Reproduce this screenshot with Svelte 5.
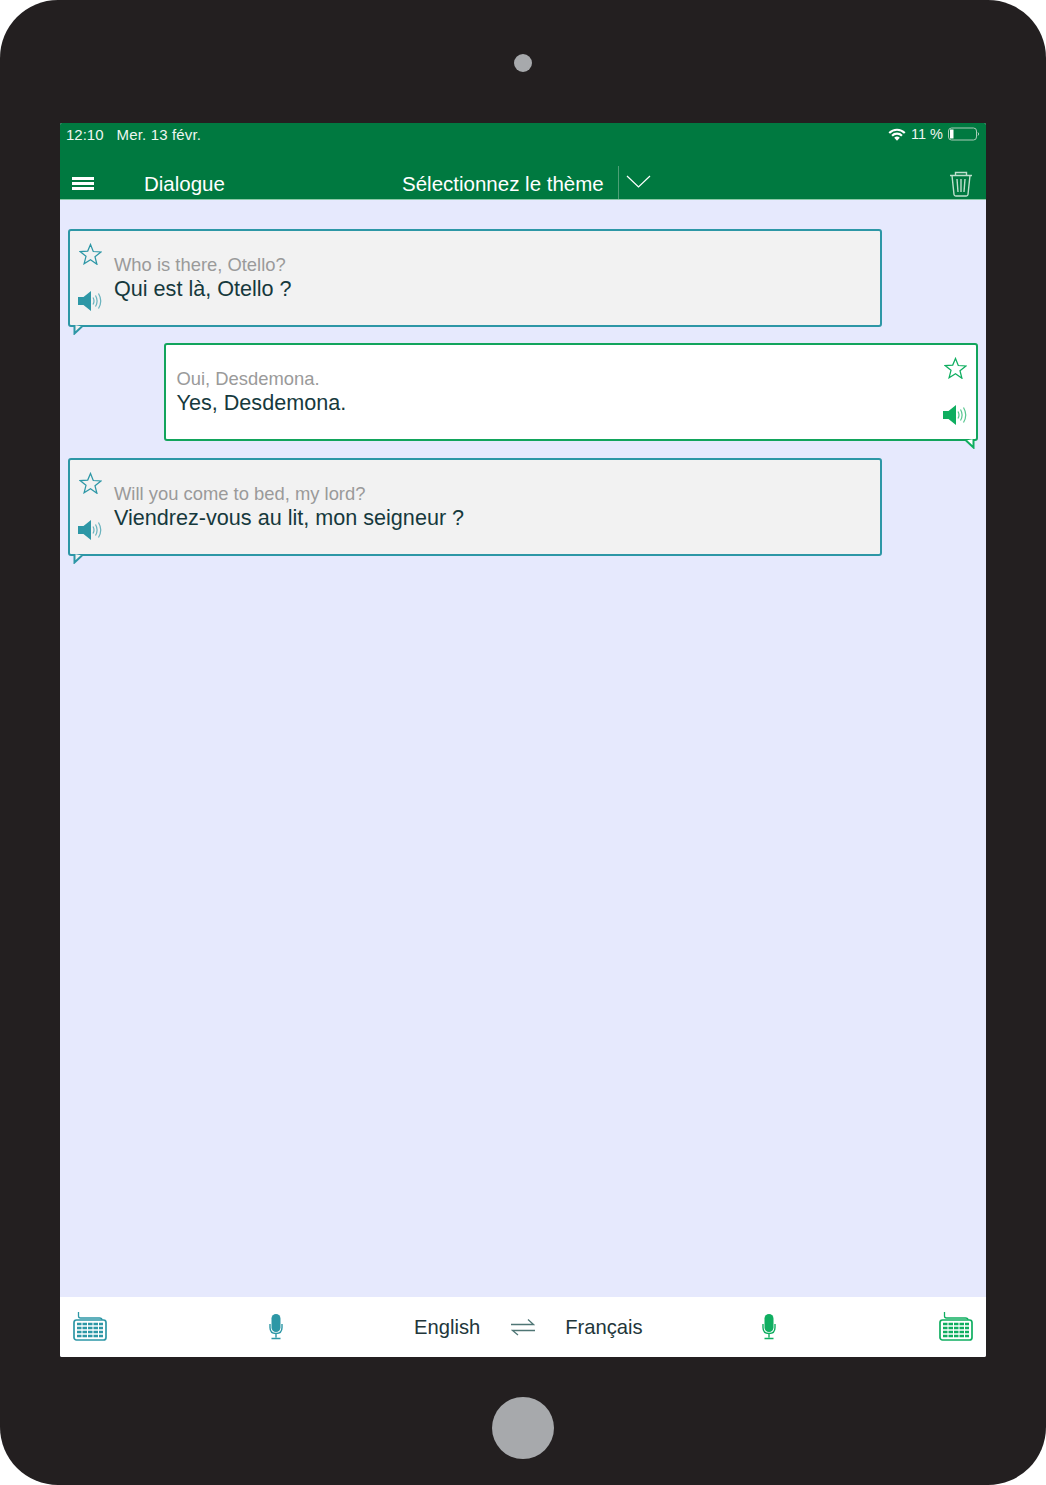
<script>
	const messages = [
		{ side: 'left', source: 'Who is there, Otello?', target: 'Qui est là, Otello ?' },
		{ side: 'right', source: 'Oui, Desdemona.', target: 'Yes, Desdemona.' },
		{ side: 'left', source: 'Will you come to bed, my lord?', target: 'Viendrez-vous au lit, mon seigneur ?' }
	];
</script>

{#snippet star()}
	<svg class="star" viewBox="0 0 24 23" width="23" height="22" fill="none" stroke="currentColor" stroke-width="1.300">
		<path d="M12 1.500l2.900 7.400 8 .5-6.200 5 2 7.800L12 17.500l-6.700 4.200 2-7.800-6.200-5 8-.5z" />
	</svg>
{/snippet}

{#snippet speaker()}
	<svg class="speaker" viewBox="0 0 24 20" width="24" height="20" fill="none" stroke="currentColor">
		<path class="solid" d="M0 6h5.500L13 0v20l-7.500-6H0z" />
		<path d="M15 6.500q2 3.500 0 7M17.500 4.500q3.200 5.500 0 11M20.500 2.500q4.500 7.500 0 15" stroke-width="1.200" opacity="0.7" />
	</svg>
{/snippet}

{#snippet keyboard()}
	<svg class="keyboard" viewBox="0 0 34 30" width="34" height="30" fill="none" stroke="currentColor">
		<path d="M5.500 1v4q0 2 2 2h19q2.500 0 2.500 2" stroke-width="1.300" />
		<rect x="1" y="9" width="32" height="20" rx="2.500" stroke-width="1.700" />
		{#each [13, 17, 21, 25] as y}
			<path d="M4 {y}h26" stroke-width="2.300" stroke-dasharray="4.500 1" />
		{/each}
	</svg>
{/snippet}

{#snippet mic()}
	<svg class="mic" viewBox="0 0 14 26" width="14" height="26" fill="none" stroke="currentColor" stroke-width="1.200">
		<rect class="solid" x="2.500" y="0" width="9" height="18" rx="4.500" />
		<path d="M1 10v3.500q0 6 6 6t6-6V10M7 19.500v4M2.500 24.500h9" stroke-width="1.400" />
	</svg>
{/snippet}

<div class="device">
	<div class="camera"></div>

	<div class="screen">
		<header class="top">
			<div class="status">
				<span class="time">12:10</span>
				<span class="date">Mer. 13 févr.</span>
				<span class="status-right">
					<svg viewBox="0 0 18 13" width="18" height="13" fill="#fff">
						<path d="M0.500 4.200a12 12 0 0 1 17 0l-1.500 1.500a10 10 0 0 0-14 0z" />
						<path d="M3.300 7a8 8 0 0 1 11.400 0l-1.500 1.500a6 6 0 0 0-8.400 0z" />
						<path d="M6.200 9.800a4 4 0 0 1 5.600 0L9 12.700z" />
					</svg>
					<span>11 %</span>
					<svg viewBox="0 0 32 14" width="32" height="14" fill="none">
						<rect x="0.500" y="1" width="28" height="12" rx="3" stroke="#a9cdb8" />
						<rect x="2" y="2.500" width="3.500" height="9" fill="#fff" />
						<path d="M30 5.500q1.500 1.500 0 3" stroke="#a9cdb8" />
					</svg>
				</span>
			</div>
			<div class="bar">
				<div class="burger"><span></span><span></span><span></span></div>
				<div class="title">Dialogue</div>
				<div class="theme">Sélectionnez le thème</div>
				<div class="chevron">
					<svg viewBox="0 0 25 14" width="25" height="14" fill="none" stroke="#fff" stroke-width="1.200">
						<path d="M1 1l11.500 11L24 1" />
					</svg>
				</div>
				<svg class="trash" viewBox="0 0 24 26" width="24" height="26" fill="none" stroke="#bfe0cd" stroke-width="1.400">
					<path d="M1 4.500h22M6.500 4.500V1.500h11v3M3 4.500l2 19q.2 1.500 1.700 1.500h10.600q1.500 0 1.700-1.500l2-19M8 8l1 13M12 8v13M16 8l-1 13" />
				</svg>
			</div>
		</header>

		<main class="thread">
			{#each messages as m}
				<div class="bubble {m.side}">
					<div class="icons">
						{@render star()}
						{@render speaker()}
					</div>
					<div class="text">
						<div class="source">{m.source}</div>
						<div class="target">{m.target}</div>
					</div>
					<svg class="tail" viewBox="0 0 10 10" width="10" height="10">
						<path d="M1.500 0v8.500L9 1.500" />
					</svg>
				</div>
			{/each}
		</main>

		<footer class="bottom">
			<div class="blue kb">{@render keyboard()}</div>
			<div class="blue mic-left">{@render mic()}</div>
			<div class="langs">
				<span>English</span>
				<svg viewBox="0 0 24 18" width="24" height="18" fill="none" stroke="#4f7675" stroke-width="1.300">
					<path d="M0 6.500h22.500L17 1.500M24 12.500H1.500L7 17" />
				</svg>
				<span class="fr">Français</span>
			</div>
			<div class="green mic-right">{@render mic()}</div>
			<div class="green kb">{@render keyboard()}</div>
		</footer>
	</div>

	<div class="home"></div>
</div>

<style>
	:global(body) {
		background: #fff;
	}

	.device {
		width: 1046px;
		height: 1485px;
		box-sizing: border-box;
		padding-top: 54px;
		display: flex;
		flex-direction: column;
		align-items: center;
		background: #231f20;
		border-radius: 58px;
		font-family: 'Liberation Sans', Arial, sans-serif;
	}

	.camera {
		width: 18px;
		height: 18px;
		border-radius: 50%;
		background: #a7a9ac;
		margin-bottom: 51px;
	}

	.home {
		width: 62px;
		height: 62px;
		border-radius: 50%;
		background: #a7a9ac;
		margin-top: 40px;
	}

	.screen {
		width: 926px;
		height: 1234px;
		display: flex;
		flex-direction: column;
		background: #e6e9fd;
		border-radius: 2px;
		overflow: hidden;
	}

	.top {
		height: 76px;
		background: #007940;
		border-bottom: 1px solid #8cc9a8;
		color: #fff;
	}

	.status {
		display: flex;
		align-items: center;
		height: 22px;
		padding: 0 6px;
		font-size: 15px;
		color: #eef6f0;
	}

	.time {
		margin-right: 13px;
	}

	.date {
		letter-spacing: 0.150px;
	}

	.status-right {
		margin-left: auto;
		display: flex;
		align-items: center;
		gap: 5px;
		font-size: 14.500px;
	}

	.bar {
		display: flex;
		align-items: center;
		height: 54px;
		padding: 0 13px 0 12px;
		position: relative;
	}

	.burger {
		width: 22px;
		display: flex;
		flex-direction: column;
		gap: 2px;
		margin-top: 22px;
	}

	.burger span {
		height: 3px;
		background: #fff;
	}

	.title {
		margin-left: 50px;
		margin-top: 23px;
		font-size: 20.500px;
		width: 258px;
		line-height: 24px;
	}

	.theme {
		margin-top: 23px;
		font-size: 20.500px;
		line-height: 24px;
		width: 216px;
	}

	.chevron {
		display: flex;
		align-items: center;
		align-self: flex-end;
		height: 33px;
		padding-left: 7px;
		border-left: 1px solid #4d9f76;
		padding-bottom: 2px;
		box-sizing: border-box;
	}

	.trash {
		margin-left: auto;
		margin-top: 24px;
	}

	.thread {
		flex: 1;
		display: flex;
		flex-direction: column;
		gap: 16px;
		padding: 29px 8px 0;
	}

	.bubble {
		position: relative;
		width: 814px;
		height: 98px;
		flex: none;
		box-sizing: border-box;
		border: 2.500px solid;
		border-radius: 3px;
		display: flex;
		padding: 12px 9px 14px 8px;
	}

	.bubble:last-child {
		margin-top: 1px;
	}

	.bubble.left {
		color: #2d97a6;
		background: #f2f2f2;
		border-color: #2d97a6;
		--fill: #f2f2f2;
	}

	.bubble.right {
		align-self: flex-end;
		flex-direction: row-reverse;
		justify-content: space-between;
		color: #0fae60;
		background: #fff;
		border-color: #12a45c;
		padding-left: 10.500px;
		--fill: #fff;
	}

	.icons {
		display: flex;
		flex-direction: column;
		justify-content: space-between;
		width: 24px;
		flex: none;
	}

	.star {
		margin-left: 1px;
	}

	.text {
		margin-left: 12px;
		padding-top: 10px;
	}

	.bubble.right .text {
		margin-left: 0;
	}

	.source {
		font-size: 18.400px;
		line-height: 23px;
		color: #9a9a9a;
	}

	.target {
		font-size: 21.600px;
		line-height: 25px;
		color: #16393d;
	}

	.solid {
		fill: currentColor;
		stroke: none;
	}

	.tail {
		position: absolute;
		bottom: -9.500px;
		fill: var(--fill);
		stroke: currentColor;
		stroke-width: 2;
	}

	.left .tail {
		left: 3px;
	}

	.right .tail {
		right: 1px;
		transform: scaleX(-1);
	}

	.bottom {
		height: 60px;
		background: #fff;
		display: flex;
		align-items: center;
		padding: 0 13px;
	}

	.blue {
		color: #2d97a6;
		display: flex;
	}

	.green {
		color: #0fae60;
		display: flex;
	}

	.kb {
		margin-bottom: 3px;
	}

	.mic-left {
		margin-left: 162px;
	}

	.langs {
		display: flex;
		align-items: center;
		margin-left: 131px;
		font-size: 20.200px;
		color: #22363a;
	}

	.langs svg {
		margin: 0 31px;
	}

	.fr {
		margin-left: -1px;
	}

	.mic-right {
		margin-left: 119px;
		margin-right: auto;
	}
</style>
